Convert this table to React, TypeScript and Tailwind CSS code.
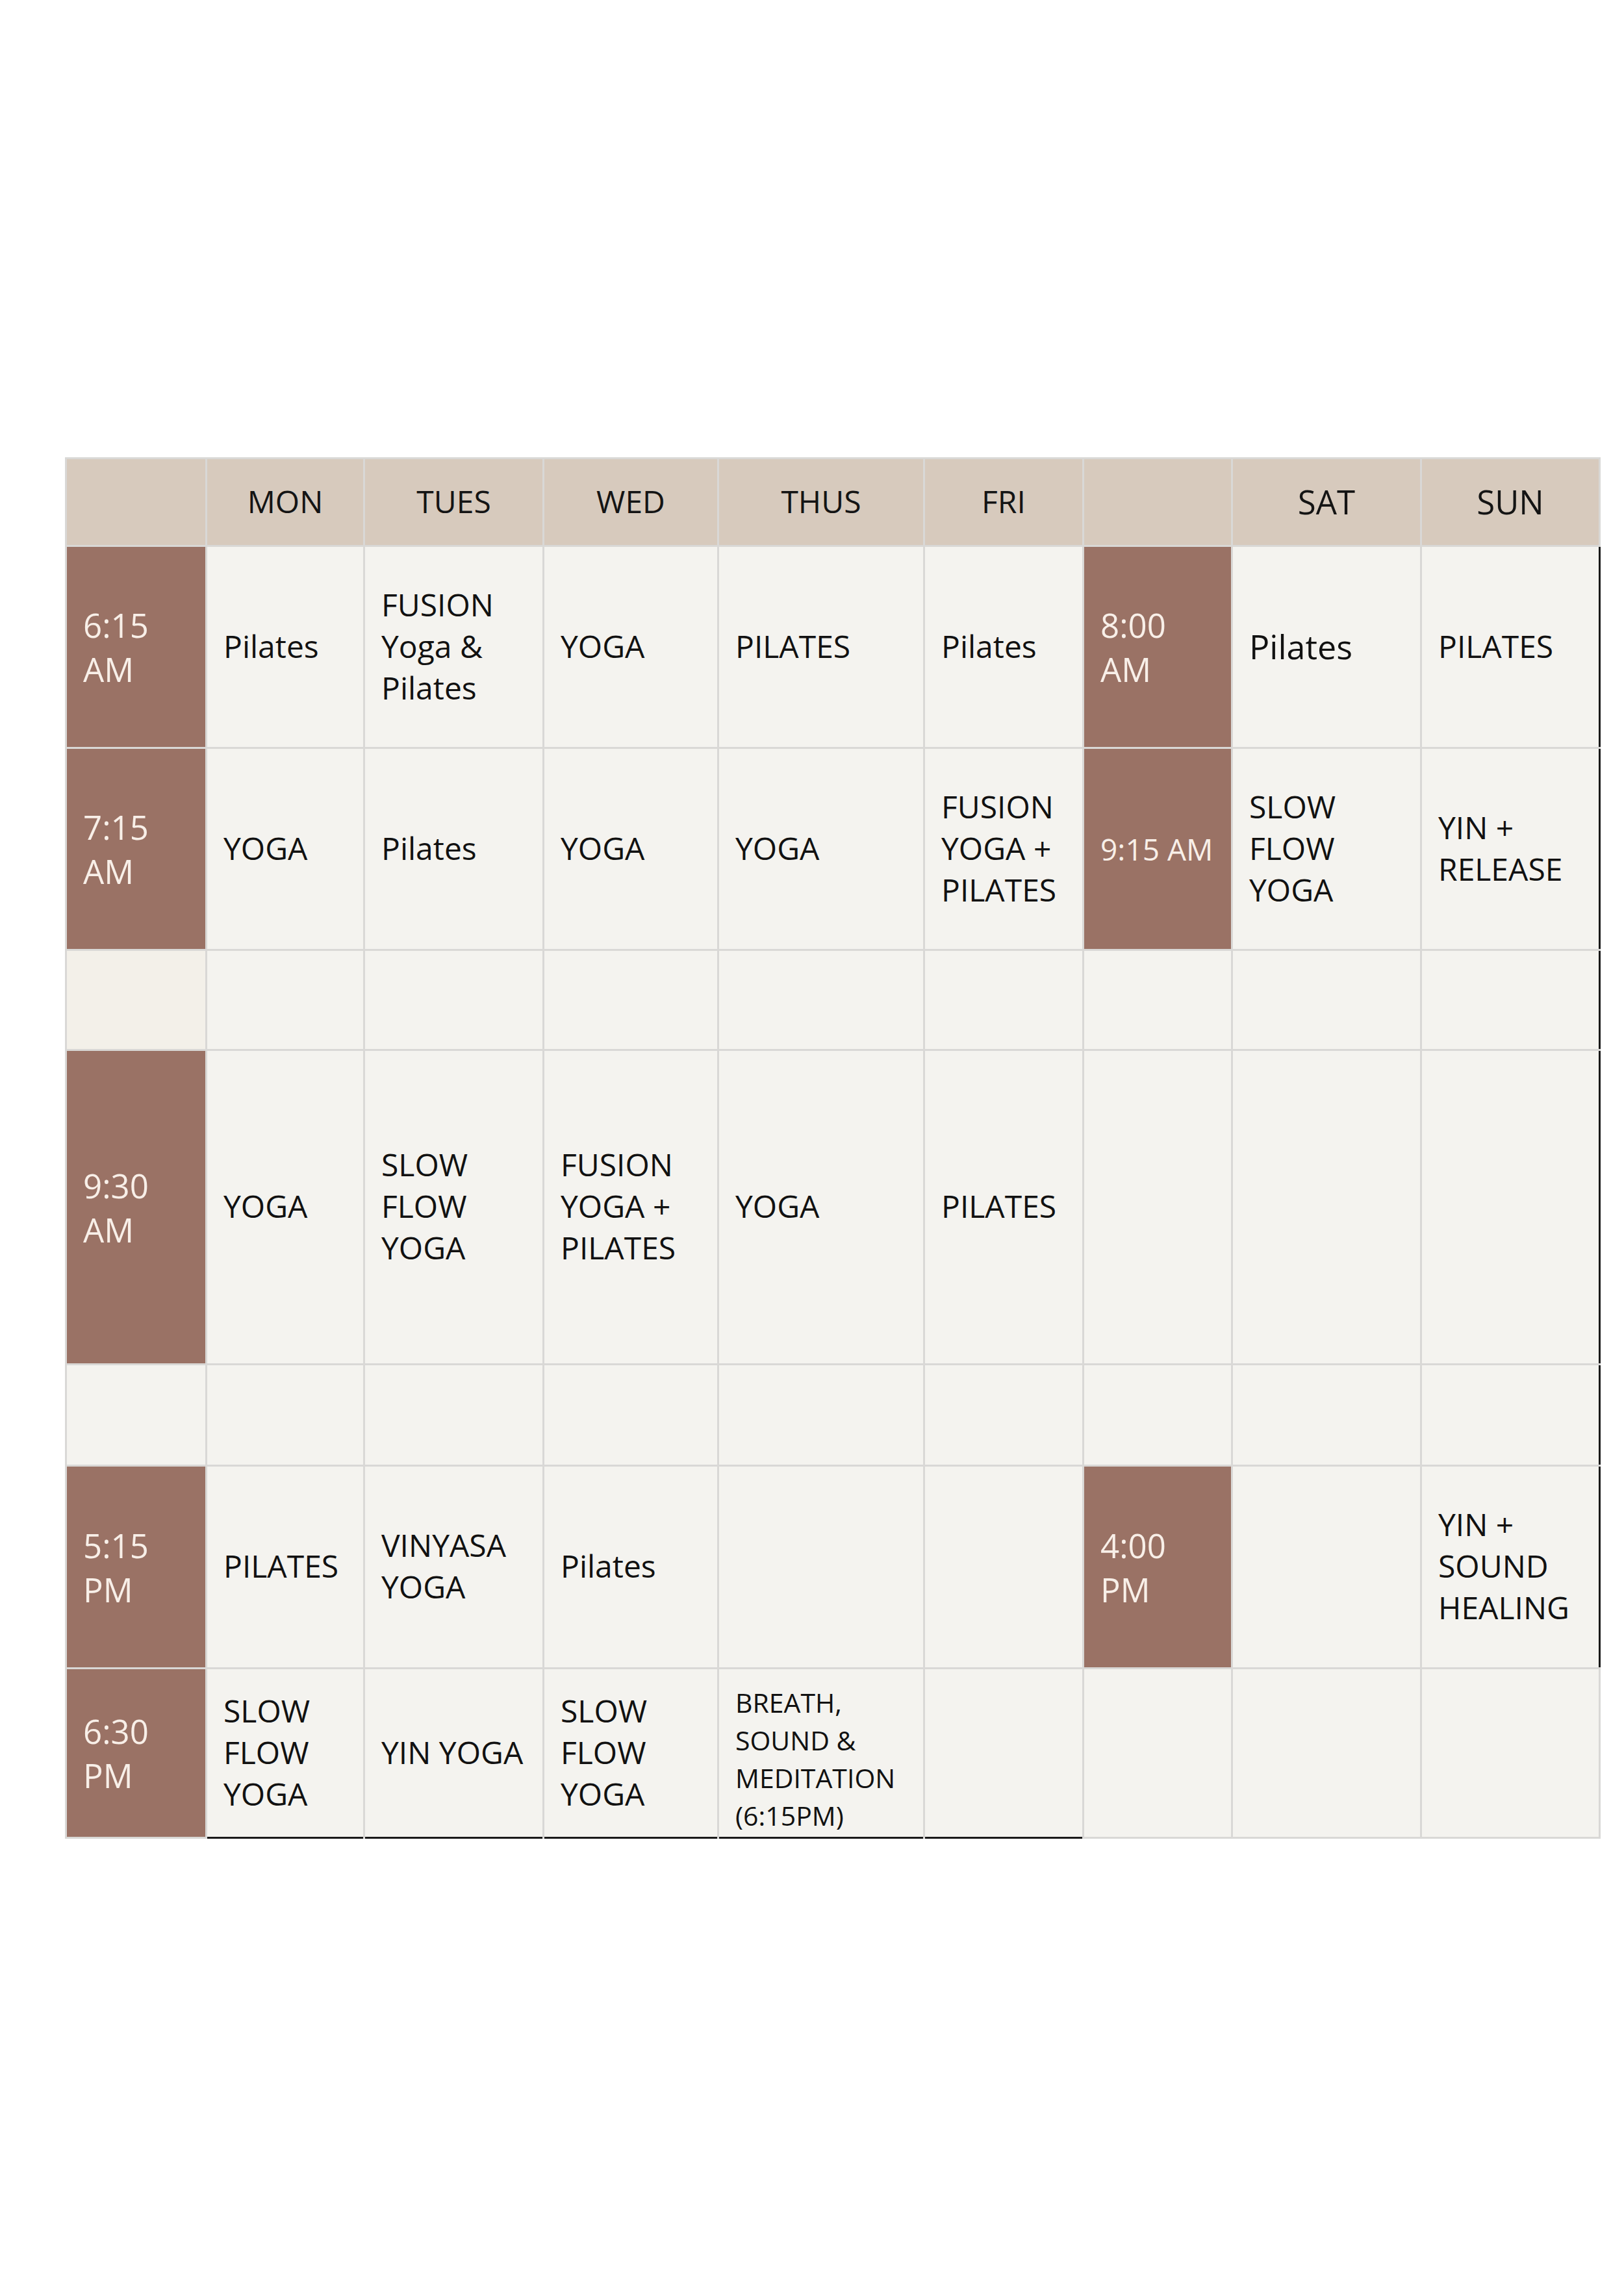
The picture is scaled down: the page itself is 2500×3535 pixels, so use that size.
type CellKind = "head" | "time" | "class" | "warm";

type CellDef = {
  kind: CellKind;
  lines?: string[];
  size?: "sm" | "lg";
  edge?: "right" | "bottom";
};

const head = (t = ""): CellDef => ({ kind: "head", lines: t ? [t] : [] });
const time = (...lines: string[]): CellDef => ({ kind: "time", lines });
const cls = (...lines: string[]): CellDef => ({ kind: "class", lines });
const empty = (): CellDef => ({ kind: "class", lines: [] });

const rows: CellDef[][] = [
  [head(), head("MON"), head("TUES"), head("WED"), head("THUS"), head("FRI"), head(), { ...head("SAT"), size: "lg" }, { ...head("SUN"), size: "lg" }],
  [
    time("6:15", "AM"),
    cls("Pilates"),
    cls("FUSION", "Yoga &", "Pilates"),
    cls("YOGA"),
    cls("PILATES"),
    cls("Pilates"),
    time("8:00", "AM"),
    { ...cls("Pilates"), size: "lg" },
    { ...cls("PILATES"), edge: "right" },
  ],
  [
    time("7:15", "AM"),
    cls("YOGA"),
    cls("Pilates"),
    cls("YOGA"),
    cls("YOGA"),
    cls("FUSION", "YOGA +", "PILATES"),
    { ...time("9:15 AM"), size: "sm" },
    cls("SLOW", "FLOW", "YOGA"),
    { ...cls("YIN +", "RELEASE"), edge: "right" },
  ],
  [{ kind: "warm" }, empty(), empty(), empty(), empty(), empty(), empty(), empty(), { ...empty(), edge: "right" }],
  [
    time("9:30", "AM"),
    cls("YOGA"),
    cls("SLOW", "FLOW", "YOGA"),
    cls("FUSION", "YOGA +", "PILATES"),
    cls("YOGA"),
    cls("PILATES"),
    empty(),
    empty(),
    { ...empty(), edge: "right" },
  ],
  [empty(), empty(), empty(), empty(), empty(), empty(), empty(), empty(), { ...empty(), edge: "right" }],
  [
    time("5:15", "PM"),
    cls("PILATES"),
    cls("VINYASA", "YOGA"),
    cls("Pilates"),
    empty(),
    empty(),
    time("4:00", "PM"),
    empty(),
    { ...cls("YIN +", "SOUND", "HEALING"), edge: "right" },
  ],
  [
    time("6:30", "PM"),
    { ...cls("SLOW", "FLOW", "YOGA"), edge: "bottom" },
    { ...cls("YIN YOGA"), edge: "bottom" },
    { ...cls("SLOW", "FLOW", "YOGA"), edge: "bottom" },
    { ...cls("BREATH,", "SOUND &", "MEDITATION", "(6:15PM)"), size: "sm", edge: "bottom" },
    { ...empty(), edge: "bottom" },
    empty(),
    empty(),
    empty(),
  ],
];

function Cell({ cell }: { cell: CellDef }) {
  const lines = cell.lines ?? [];
  let box = "flex flex-col justify-center";
  let text = "";

  if (cell.kind === "head") {
    box += " items-center pb-[3px] bg-[#d7cabd]";
    text = cell.size === "lg" ? "text-[51px] leading-[64px] text-[#141414]" : "text-[48px] leading-[64px] text-[#141414]";
  } else if (cell.kind === "time") {
    box += " pl-[25px] bg-[#9a7265]";
    text =
      cell.size === "sm"
        ? "text-[46px] leading-[64px] text-[#f8efe8]"
        : "text-[51px] leading-[68px] text-[#f8efe8]";
  } else if (cell.kind === "warm") {
    box += " bg-[#f3f0e9]";
  } else {
    box += " pl-[25px] bg-[#f4f3ef]";
    if (cell.size === "sm") {
      box += " pt-[18px]";
      text = "text-[41px] leading-[58px] text-[#111]";
    } else if (cell.size === "lg") text = "text-[52px] leading-[64px] text-[#111]";
    else text = "text-[48px] leading-[64px] text-[#111]";
    if (cell.size !== "sm") box += " pb-[3px]";
  }

  if (cell.edge === "right") box += " shadow-[3px_0_0_0_#1a1a1a]";
  if (cell.edge === "bottom") box += " shadow-[0_3px_0_0_#1a1a1a]";

  return (
    <div className={box}>
      {lines.map((l) => (
        <span key={l} className={`whitespace-nowrap ${text}`}>
          {l}
        </span>
      ))}
    </div>
  );
}

export default function App() {
  return (
    <div className="w-[2500px] h-[3535px] bg-white font-['Open_Sans',sans-serif] pt-[704px] pl-[100px]">
      <div className="inline-grid grid-cols-[213px_240px_273px_266px_314px_242px_226px_288px_272px] grid-rows-[132px_308px_308px_151px_481px_153px_309px_258px] gap-[3px] p-[3px] bg-[#d9d8d6]">
        {rows.map((row, r) => row.map((cell, c) => <Cell key={`${r}-${c}`} cell={cell} />))}
      </div>
    </div>
  );
}
